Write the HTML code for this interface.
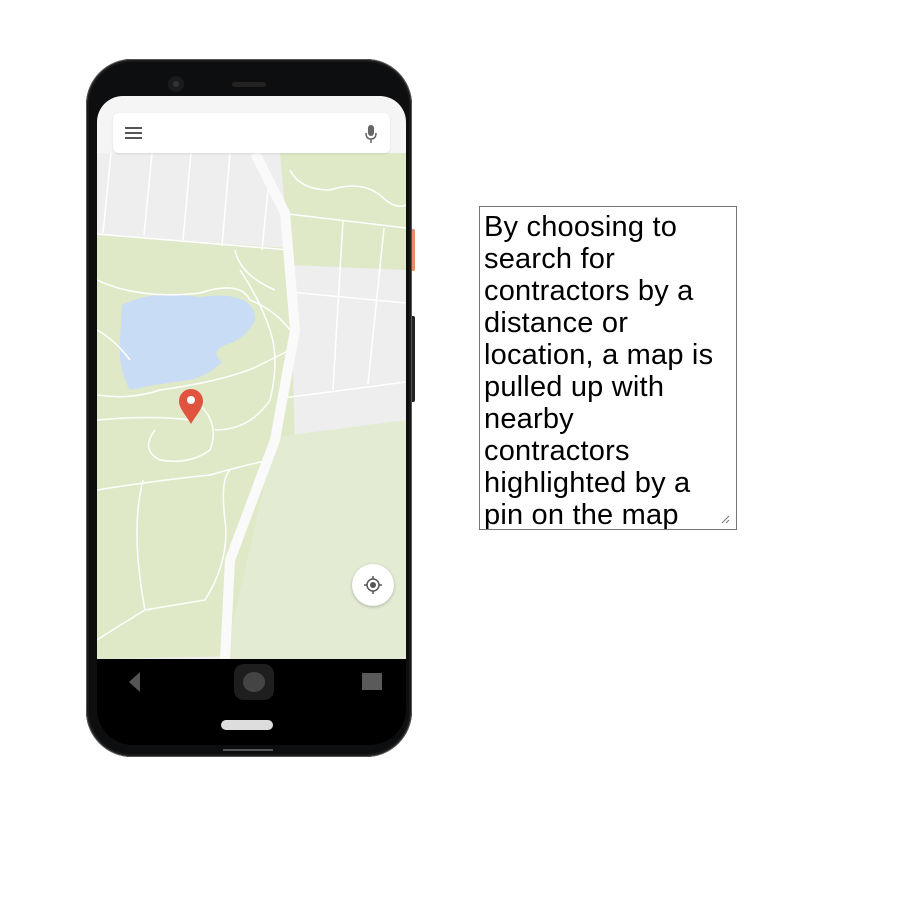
<!DOCTYPE html>
<html><head><meta charset="utf-8"><style>
html,body{margin:0;padding:0;background:#fff;width:908px;height:914px;overflow:hidden;position:relative}
.phone{position:absolute;left:86px;top:59px;width:326px;height:698px;border-radius:46px;background:#0d0e10;box-shadow:0 0 0 1px #555 inset, 0 0 0 3px #1a1a1a inset}
.btnr{position:absolute;left:410px;top:229px;width:5px;height:42px;background:#e98a6e;border-radius:0 2px 2px 0}
.btnr2{position:absolute;left:410px;top:316px;width:5px;height:86px;background:#222;border-radius:0 2px 2px 0}
.screen{position:absolute;left:97px;top:96px;width:309px;height:563px;border-radius:26px 26px 0 0;overflow:hidden;background:#f5f5f5}
.nav{position:absolute;left:97px;top:659px;width:309px;height:86px;background:#000;border-radius:0 0 36px 36px}
.txt{position:absolute;left:479px;top:206px;width:256px;height:322px;border:1px solid #767676;overflow:hidden;font-family:"Liberation Sans",sans-serif;font-size:29px;line-height:32px;color:#000;white-space:nowrap;letter-spacing:0.2px}
.txt div{padding:4px 0 0 4px}
</style></head><body>
<div class="btnr"></div><div class="btnr2"></div>
<div class="phone"></div>
<div style="position:absolute;left:168px;top:76px;width:16px;height:16px;border-radius:50%;background:#1a1b1e"></div>
<div style="position:absolute;left:173px;top:81px;width:6px;height:6px;border-radius:50%;background:#333"></div>
<div style="position:absolute;left:232px;top:82px;width:34px;height:5px;border-radius:3px;background:#222"></div>
<div class="screen">
<svg width="309" height="563" viewBox="97 96 309 563" style="position:absolute;left:0;top:0">
<rect x="97" y="153" width="309" height="506" fill="#eeeeee"/>
<path d="M97 235 L290 248 L300 655 L97 659Z" fill="#dfe9c8"/>
<path d="M280 153 L406 153 L406 270 L290 265Z" fill="#dfe9c8"/>
<path d="M275 437 L406 420 L406 659 L225 659 Z" fill="#e3ecd3"/>
<path d="M122 305 Q150 290 200 297 Q255 290 255 320 Q245 340 225 345 Q210 352 222 362 Q210 375 190 380 Q150 385 130 390 Q118 370 120 340Z" fill="#c8dcf5"/>
<g stroke="#fff" stroke-width="1.5" fill="none">
<path d="M97 234 L290 250"/><path d="M280 213 L406 228"/><path d="M290 292 L406 303"/><path d="M283 398 L406 382"/>
<path d="M111 153 L103 233"/><path d="M152 153 L144 235"/><path d="M191 153 L183 240"/><path d="M230 153 L222 246"/><path d="M268 190 L262 250"/>
<path d="M343 220 L333 390"/><path d="M384 228 L368 384"/>
<path d="M97 280 Q140 300 200 293 Q240 280 250 300 Q275 310 290 330"/>
<path d="M97 330 Q115 340 130 360 M97 395 Q130 400 160 390 Q230 380 260 365 Q270 360 290 350"/>
<path d="M235 250 Q240 275 275 290 M240 270 Q260 300 270 330 Q280 360 270 400 Q250 430 215 430"/>
<path d="M97 420 Q150 415 190 420 M97 490 Q160 480 210 475 Q245 465 270 460"/>
<path d="M155 430 Q140 450 160 460 Q190 465 210 450 Q220 425 200 405"/>
<path d="M143 480 Q130 530 145 610 L205 600 Q230 560 225 520 Q220 480 230 470"/>
<path d="M97 640 Q120 625 145 610"/>
<path d="M290 170 Q300 190 330 190 Q360 180 380 195 Q395 210 406 205"/>
</g>
<path d="M255 153 L285 213 L295 330 L275 440 L230 560 L225 659" stroke="#fafafa" stroke-width="10" fill="none"/>
<path d="M191 424 C185 414 179 408 179 401 A12 12 0 0 1 203 401 C203 408 197 414 191 424Z" fill="#e0533f"/>
<circle cx="191" cy="400" r="4" fill="#fff"/>
</svg>
<div style="position:absolute;left:16px;top:17px;width:277px;height:40px;background:#fff;border-radius:6px;box-shadow:0 1px 2px rgba(0,0,0,.1)"></div>
<div style="position:absolute;left:28px;top:31px;width:17px;height:2px;background:#555;box-shadow:0 5px 0 #555,0 10px 0 #555"></div>
<svg style="position:absolute;left:267px;top:28px" width="14" height="20" viewBox="0 0 14 20"><rect x="4" y="1" width="6" height="11" rx="3" fill="#666"/><path d="M2 9 Q2 15 7 15 Q12 15 12 9 M7 15 L7 19" stroke="#666" stroke-width="1.5" fill="none"/></svg>
<div style="position:absolute;left:255px;top:468px;width:42px;height:42px;border-radius:50%;background:#fff;box-shadow:0 1px 3px rgba(0,0,0,.25)"></div>
<svg style="position:absolute;left:265px;top:478px" width="22" height="22" viewBox="0 0 22 22"><circle cx="11" cy="11" r="6" stroke="#555" stroke-width="1.5" fill="none"/><circle cx="11" cy="11" r="3" fill="#555"/><path d="M11 2V5M11 17V20M2 11H5M17 11H20" stroke="#555" stroke-width="1.5"/></svg>
</div>
<div class="nav"></div>
<div style="position:absolute;left:129px;top:672px;width:0;height:0;border-top:10px solid transparent;border-bottom:10px solid transparent;border-right:11px solid #555"></div>
<div style="position:absolute;left:234px;top:664px;width:40px;height:36px;border-radius:10px;background:#1e1e1e"></div>
<div style="position:absolute;left:243px;top:672px;width:22px;height:20px;border-radius:50%;background:#444"></div>
<div style="position:absolute;left:362px;top:673px;width:20px;height:17px;background:#5a5a5a"></div>
<div style="position:absolute;left:221px;top:720px;width:52px;height:10px;border-radius:5px;background:#ddd"></div>
<div style="position:absolute;left:223px;top:749px;width:50px;height:2px;background:#555"></div>
<div class="txt"><div>By choosing to<br>search for<br>contractors by a<br>distance or<br>location, a map is<br>pulled up with<br>nearby<br>contractors<br>highlighted by a<br>pin on the map</div></div>
<svg style="position:absolute;left:720px;top:514px" width="10" height="10"><path d="M2 9L9 2M6 9L9 6" stroke="#777" stroke-width="1"/></svg>
</body></html>
